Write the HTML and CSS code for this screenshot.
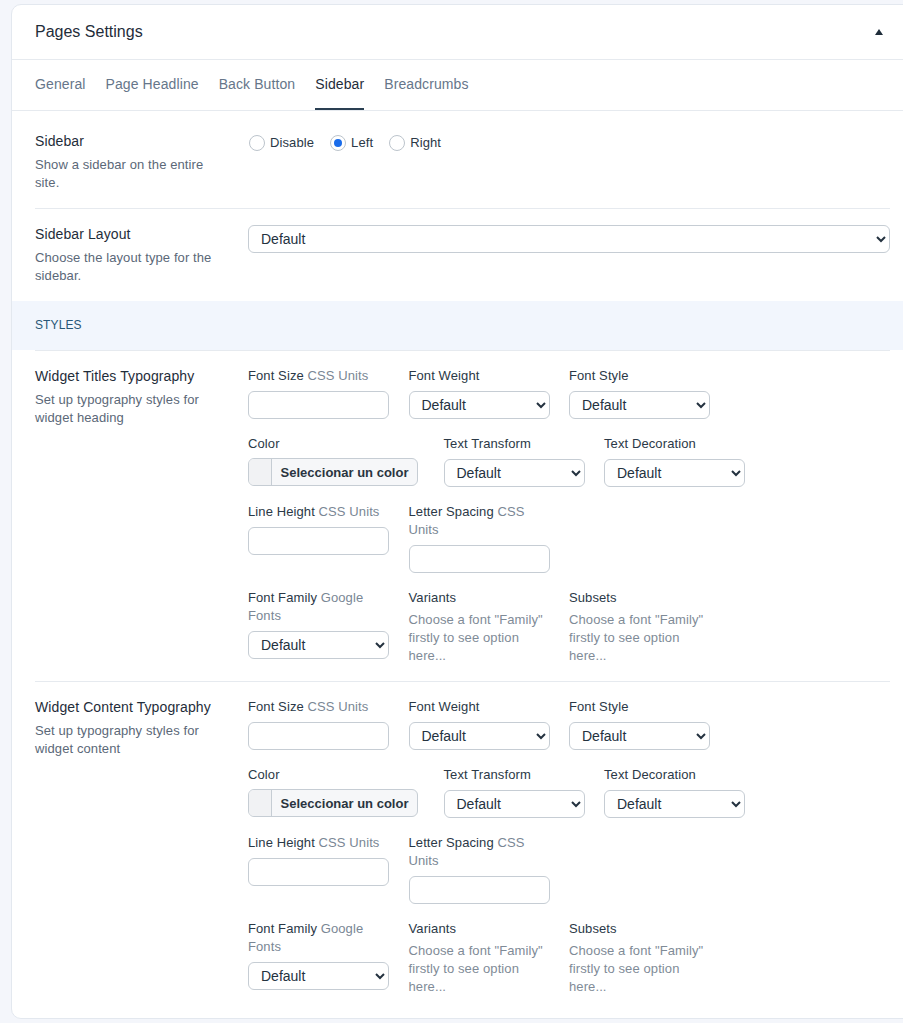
FILE: index.html
```html
<!DOCTYPE html>
<html lang="en">
<head>
  <meta charset="UTF-8">
  <meta name="viewport" content="width=device-width, initial-scale=1.0">
  <title>Pages Settings</title>
  <link rel="stylesheet" href="styles.css">
</head>
<body>

  <div class="panel">
    <div class="panel-head">
      <h2>Pages Settings</h2>
      <span class="toggle"></span>
    </div>

    <nav class="tabs">
      <a class="tab">General</a>
      <a class="tab">Page Headline</a>
      <a class="tab">Back Button</a>
      <a class="tab active">Sidebar</a>
      <a class="tab">Breadcrumbs</a>
    </nav>

    <div class="panel-body">

      <div class="row">
        <div class="row-info">
          <div class="row-title">Sidebar</div>
          <p class="row-desc">Show a sidebar on the entire site.</p>
        </div>
        <div class="row-control">
          <div class="radios">
            <label class="radio"><input type="radio" name="sidebar"> Disable</label>
            <label class="radio"><input type="radio" name="sidebar" checked> Left</label>
            <label class="radio"><input type="radio" name="sidebar"> Right</label>
          </div>
        </div>
      </div>

      <div class="row bordered">
        <div class="row-info">
          <div class="row-title">Sidebar Layout</div>
          <p class="row-desc">Choose the layout type for the sidebar.</p>
        </div>
        <div class="row-control">
          <select class="select wide"><option>Default</option></select>
        </div>
      </div>

      <div class="band">STYLES</div>

      <div class="row bordered">
        <div class="row-info">
          <div class="row-title">Widget Titles Typography</div>
          <p class="row-desc">Set up typography styles for widget heading</p>
        </div>
        <div class="row-control">
          <div class="type-row">
            <div class="field">
              <div class="field-label">Font Size <span>CSS Units</span></div>
              <input class="text" type="text">
            </div>
            <div class="field">
              <div class="field-label">Font Weight</div>
              <select class="select"><option>Default</option></select>
            </div>
            <div class="field">
              <div class="field-label">Font Style</div>
              <select class="select"><option>Default</option></select>
            </div>
          </div>
          <div class="type-row">
            <div class="field color-field">
              <div class="field-label">Color</div>
              <button class="color-btn"><span class="swatch"></span><span class="color-text">Seleccionar un color</span></button>
            </div>
            <div class="field">
              <div class="field-label">Text Transform</div>
              <select class="select"><option>Default</option></select>
            </div>
            <div class="field">
              <div class="field-label">Text Decoration</div>
              <select class="select"><option>Default</option></select>
            </div>
          </div>
          <div class="type-row">
            <div class="field">
              <div class="field-label">Line Height <span>CSS Units</span></div>
              <input class="text" type="text">
            </div>
            <div class="field">
              <div class="field-label">Letter Spacing <span>CSS Units</span></div>
              <input class="text" type="text">
            </div>
          </div>
          <div class="type-row">
            <div class="field">
              <div class="field-label">Font Family <span>Google Fonts</span></div>
              <select class="select"><option>Default</option></select>
            </div>
            <div class="field">
              <div class="field-label">Variants</div>
              <p class="field-note">Choose a font "Family" firstly to see option here...</p>
            </div>
            <div class="field">
              <div class="field-label">Subsets</div>
              <p class="field-note">Choose a font "Family" firstly to see option here...</p>
            </div>
          </div>
        </div>
      </div>

      <div class="row bordered">
        <div class="row-info">
          <div class="row-title">Widget Content Typography</div>
          <p class="row-desc">Set up typography styles for widget content</p>
        </div>
        <div class="row-control">
          <div class="type-row">
            <div class="field">
              <div class="field-label">Font Size <span>CSS Units</span></div>
              <input class="text" type="text">
            </div>
            <div class="field">
              <div class="field-label">Font Weight</div>
              <select class="select"><option>Default</option></select>
            </div>
            <div class="field">
              <div class="field-label">Font Style</div>
              <select class="select"><option>Default</option></select>
            </div>
          </div>
          <div class="type-row">
            <div class="field color-field">
              <div class="field-label">Color</div>
              <button class="color-btn"><span class="swatch"></span><span class="color-text">Seleccionar un color</span></button>
            </div>
            <div class="field">
              <div class="field-label">Text Transform</div>
              <select class="select"><option>Default</option></select>
            </div>
            <div class="field">
              <div class="field-label">Text Decoration</div>
              <select class="select"><option>Default</option></select>
            </div>
          </div>
          <div class="type-row">
            <div class="field">
              <div class="field-label">Line Height <span>CSS Units</span></div>
              <input class="text" type="text">
            </div>
            <div class="field">
              <div class="field-label">Letter Spacing <span>CSS Units</span></div>
              <input class="text" type="text">
            </div>
          </div>
          <div class="type-row">
            <div class="field">
              <div class="field-label">Font Family <span>Google Fonts</span></div>
              <select class="select"><option>Default</option></select>
            </div>
            <div class="field">
              <div class="field-label">Variants</div>
              <p class="field-note">Choose a font "Family" firstly to see option here...</p>
            </div>
            <div class="field">
              <div class="field-label">Subsets</div>
              <p class="field-note">Choose a font "Family" firstly to see option here...</p>
            </div>
          </div>
        </div>
      </div>

    </div>
  </div>

</body>
</html>
```

FILE: styles.css
```css
body {
  margin: 0;
  padding: 4px 0 0 11px;
  background: #f4f6fb;
  font-family: "Liberation Sans", Arial, sans-serif;
  letter-spacing: 0.1px;
  color: #1f2d3a;
  overflow: hidden;
}

.panel {
  width: 903px;
  box-sizing: border-box;
  background: #fff;
  border: 1px solid #e3e8ef;
  border-radius: 10px;
}

.panel-head {
  display: flex;
  align-items: center;
  justify-content: space-between;
  height: 54px;
  padding: 0 30px 0 23px;
  border-bottom: 1px solid #e6eaef;
}

.panel-head h2 {
  margin: 0;
  font-size: 16px;
  font-weight: normal;
  letter-spacing: 0;
  color: #1f2d3a;
}

.toggle {
  width: 0;
  height: 0;
  border-left: 4px solid transparent;
  border-right: 4px solid transparent;
  border-bottom: 6px solid #1f2d3a;
}

.tabs {
  display: flex;
  gap: 20px;
  padding: 0 23px;
  height: 50px;
  border-bottom: 1px solid #e6eaef;
}

.tab {
  display: flex;
  align-items: center;
  font-size: 14px;
  color: #66768a;
  border-bottom: 2px solid transparent;
  cursor: pointer;
}

.tab.active {
  color: #1f2d3a;
  border-bottom-color: #2a3f52;
}

.panel-body {
  padding: 5px 23px 6px;
}

.row {
  display: flex;
  padding: 16px 0;
}

.row.bordered {
  border-top: 1px solid #e6eaef;
}

.row-info {
  flex: none;
  width: 190px;
  margin-right: 23px;
}

.row-title {
  font-size: 14px;
  line-height: 19px;
  color: #1f2d3a;
}

.row-desc {
  margin: 5px 0 0;
  font-size: 13px;
  line-height: 18px;
  color: #5b6878;
}

.row-control {
  flex: 1;
}

.radios {
  display: flex;
  gap: 15px;
  padding-top: 2px;
}

.radio {
  display: flex;
  align-items: center;
  gap: 5px;
  font-size: 13px;
  line-height: 18px;
  color: #2b3947;
}

.radio input {
  appearance: none;
  width: 16px;
  height: 16px;
  margin: 0 0 0 1px;
  border: 1px solid #bcc4cc;
  border-radius: 50%;
  background: #fff;
  display: grid;
  place-items: center;
}

.radio input:checked::after {
  content: "";
  width: 8px;
  height: 8px;
  border-radius: 50%;
  background: #1a6cea;
}

.select, .text {
  display: block;
  width: 100%;
  height: 28px;
  box-sizing: border-box;
  border: 1px solid #c6cdd4;
  border-radius: 6px;
  background: #fff;
  font-family: inherit;
  font-size: 14px;
  color: #24323f;
}

.select {
  padding: 0 4px 0 8px;
}

.band {
  margin: 0 -23px;
  padding: 0 23px;
  height: 49px;
  line-height: 49px;
  background: #f2f6fd;
  font-size: 12px;
  color: #285777;
}

.type-row {
  display: flex;
  gap: 19.5px;
  align-items: flex-start;
  margin-bottom: 16px;
}

.type-row:last-child {
  margin-bottom: 0;
}

.field {
  width: 141px;
}

.field.color-field {
  width: 176px;
}

.field-label {
  font-size: 13px;
  line-height: 18px;
  color: #2b3947;
  margin-bottom: 6px;
}

.color-field .field-label {
  margin-bottom: 5px;
}

.field-label span {
  color: #7a8795;
}

.field-note {
  margin: -2px 0 0;
  font-size: 13px;
  line-height: 18px;
  color: #7f8b97;
}

.color-btn {
  display: flex;
  align-items: stretch;
  width: 170px;
  height: 28px;
  padding: 0;
  border: 1px solid #c6cdd4;
  border-radius: 6px;
  background: #f6f7f9;
  overflow: hidden;
  font-family: inherit;
  cursor: pointer;
}

.swatch {
  width: 22px;
  border-right: 1px solid #c6cdd4;
  background: #f1f2f4;
}

.color-text {
  flex: 1;
  display: flex;
  align-items: center;
  justify-content: center;
  font-size: 13px;
  font-weight: bold;
  letter-spacing: 0;
  color: #2a3440;
}
```
